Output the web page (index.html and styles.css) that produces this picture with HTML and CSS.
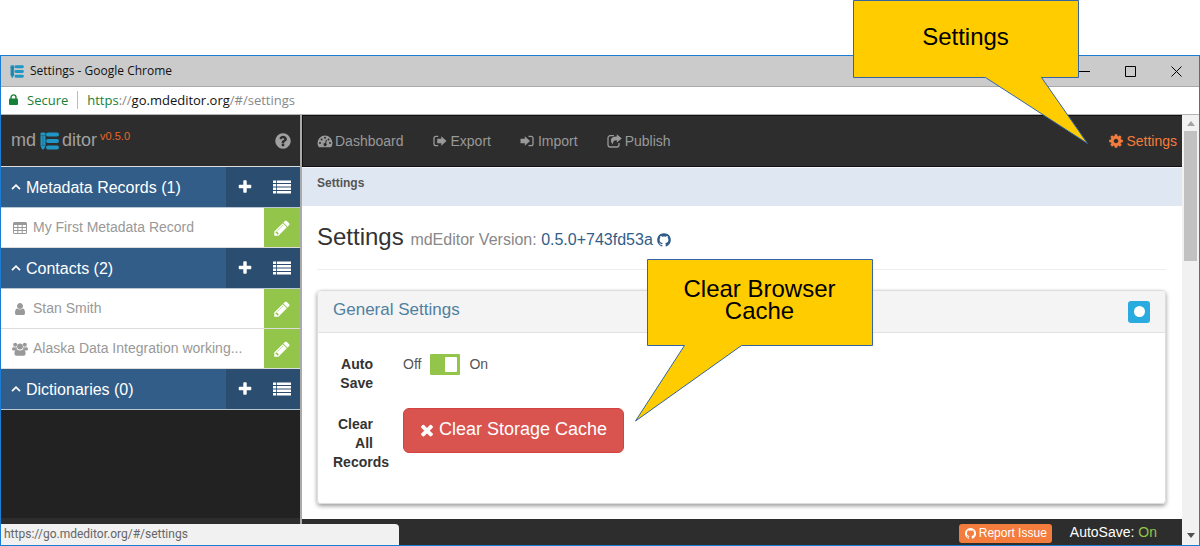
FILE: index.html
```html
<!DOCTYPE html>
<html lang="en">
<head>
<meta charset="utf-8">
<title>Settings</title>
<link rel="stylesheet" href="styles.css">
</head>
<body>
<svg class="defs" aria-hidden="true">
  <symbol id="plus" viewBox="0 0 1792 1792"><path d="M1600 736v192q0 40-28 68t-68 28h-416v416q0 40-28 68t-68 28h-192q-40 0-68-28t-28-68v-416h-416q-40 0-68-28t-28-68v-192q0-40 28-68t68-28h416v-416q0-40 28-68t68-28h192q40 0 68 28t28 68v416h416q40 0 68 28t28 68z"/></symbol>
  <symbol id="times" viewBox="0 0 1792 1792"><path d="M1490 1322q0 40-28 68l-136 136q-28 28-68 28t-68-28l-294-294-294 294q-28 28-68 28t-68-28l-136-136q-28-28-28-68t28-68l294-294-294-294q-28-28-28-68t28-68l136-136q28-28 68-28t68 28l294 294 294-294q28-28 68-28t68 28l136 136q28 28 28 68t-28 68l-294 294 294 294q28 28 28 68z"/></symbol>
  <symbol id="pencil" viewBox="0 0 1792 1792"><path d="M491 1536l91-91-235-235-91 91v107h128v128h107zm523-928q0-22-22-22-10 0-17 7l-542 542q-7 7-7 17 0 22 22 22 10 0 17-7l542-542q7-7 7-17zm-54-192l416 416-832 832h-416v-416zm683 96q0 53-37 90l-166 166-416-416 166-165q36-38 90-38 53 0 91 38l235 234q37 39 37 91z"/></symbol>
  <symbol id="help" viewBox="0 0 1792 1792"><path d="M1024 1376v-192q0-14-9-23t-23-9h-192q-14 0-23 9t-9 23v192q0 14 9 23t23 9h192q14 0 23-9t9-23zm256-672q0-88-55.500-163t-138.500-116-170-41q-243 0-371 213-15 24 8 42l132 100q7 6 19 6 16 0 25-12 53-68 86-92 34-24 86-24 48 0 85.500 26t37.500 59q0 38-20 61t-68 45q-63 28-115.500 86.500t-52.500 125.500v36q0 14 9 23t23 9h192q14 0 23-9t9-23q0-19 21.500-49.500t54.500-49.500q32-18 49-28.500t46-35 44.500-48 28-60.500 12.500-81zm384 192q0 209-103 385.500t-279.500 279.500-385.500 103-385.500-103-279.500-279.500-103-385.500 103-385.500 279.500-279.500 385.500-103 385.500 103 279.500 279.500 103 385.500z"/></symbol>
  <symbol id="cog" viewBox="0 0 1792 1792"><path d="M1152 896q0-106-75-181t-181-75-181 75-75 181 75 181 181 75 181-75 75-181zm512-109v222q0 12-8 23t-20 13l-185 28q-19 54-39 91 35 50 107 138 10 12 10 25t-9 23q-27 37-99 108t-94 71q-12 0-26-9l-138-108q-44 23-91 38-16 136-29 186-7 28-36 28h-222q-14 0-24.500-8.500t-11.500-21.500l-28-184q-49-16-90-37l-141 107q-10 9-25 9-14 0-25-11-126-114-165-168-7-10-7-23 0-12 8-23 15-21 51-66.500t54-70.500q-27-50-41-99l-183-27q-13-2-21-12.500t-8-23.500v-222q0-12 8-23t19-13l186-28q14-46 39-92-40-57-107-138-10-12-10-24 0-10 9-23 26-36 98.500-107.500t94.500-71.500q13 0 26 10l138 107q44-23 91-38 16-136 29-186 7-28 36-28h222q14 0 24.500 8.500t11.500 21.500l28 184q49 16 90 37l142-107q9-9 24-9 13 0 25 10 129 119 165 170 7 8 7 22 0 12-8 23-15 21-51 66.500t-54 70.500q26 50 41 98l183 28q13 2 21 12.500t8 23.500z"/></symbol>
  <symbol id="user" viewBox="0 0 1792 1792"><path d="M1536 1399q0 109-62.500 187t-150.500 78h-854q-88 0-150.500-78t-62.500-187q0-85 8.500-160.500t31.500-152 58.500-131 94-89 134.500-34.500q131 128 313 128t313-128q76 0 134.500 34.500t94 89 58.500 131 31.500 152 8.500 160.500zm-256-887q0 159-112.500 271.500t-271.500 112.500-271.500-112.500-112.500-271.500 112.500-271.500 271.500-112.500 271.500 112.500 112.500 271.500z"/></symbol>
  <symbol id="github" viewBox="0 0 1792 1792"><path d="M896 128q209 0 385.500 103t279.500 279.500 103 385.500q0 251-146.500 451.500t-378.500 277.500q-27 5-40-7t-13-30q0-3 .5-76.500t.5-134.500q0-97-52-142 57-6 102.500-18t94-39 81-66.500 53-105 20.500-150.500q0-119-79-206 37-91-8-204-28-9-81 11t-92 44l-38 24q-93-26-192-26t-192 26q-16-11-42.500-27t-83.500-38.500-85-13.500q-45 113-8 204-79 87-79 206 0 85 20.500 150t52.500 105 80.500 67 94 39 102.500 18q-39 36-49 103-21 10-45 15t-57 5-65.500-21.500-55.500-62.500q-19-32-48.500-52t-49.500-24l-20-3q-21 0-29 4.500t-5 11.500 9 14 13 12l7 5q22 10 43.500 38t31.500 51l10 23q13 38 44 61.500t67 30 69.500 7 55.500-3.500l23-4q0 38 .5 88.500t.5 54.500q0 18-13 30t-40 7q-232-77-378.500-277.500t-146.500-451.500q0-209 103-385.500t279.500-279.500 385.500-103z"/></symbol>
  <symbol id="list" viewBox="0 0 18 14"><path d="M0 .5h3.200V3H0zM4 .5h14V3H4zM0 4h3.200v2.500H0zM4 4h14v2.500H4zM0 7.500h3.200V10H0zM4 7.500h14V10H4zM0 11h3.200v2.500H0zM4 11h14v2.500H4z"/></symbol>
  <symbol id="table" viewBox="0 0 14 14"><path fill-rule="evenodd" d="M1.500 1h11A1.500 1.500 0 0 1 14 2.500v9a1.500 1.500 0 0 1-1.500 1.500h-11A1.500 1.500 0 0 1 0 11.500v-9A1.500 1.500 0 0 1 1.500 1zM1 4v2h3.300V4zm4.300 0v2h3.400V4zm4.400 0v2H13V4zM1 7v2h3.300V7zm4.300 0v2h3.400V7zm4.400 0v2H13V7zM1 10v2h3.300v-2zm4.300 0v2h3.400v-2zm4.400 0v2H13v-2z"/></symbol>
  <symbol id="users" viewBox="0 0 16 14"><circle cx="3.200" cy="2.800" r="2"/><circle cx="12.800" cy="2.800" r="2"/><path d="M1.600 4.900q1.600 1 3 .2-.2 1.600.9 2.400-1.500.1-2.300 1H1.400Q0 8.500 0 7.200q0-2.200 1.600-2.300zM14.400 4.900q-1.600 1-3 .2.200 1.600-.9 2.400 1.500.1 2.300 1h1.800q1.400 0 1.400-1.300 0-2.200-1.600-2.300z"/><circle cx="8" cy="4.500" r="2.900"/><path d="M5 7.500q3 2 6 0 2.600.2 2.600 4 0 2.200-2 2.200H4.400q-2 0-2-2.200 0-3.800 2.600-4z"/></symbol>
  <symbol id="gauge" viewBox="0 0 16 14"><path fill-rule="evenodd" d="M8 1.500a7.500 7.500 0 0 1 7.500 7.500q0 2.200-1.200 4-.2.300-.6.300H2.300q-.4 0-.6-.3Q.5 11.200.5 9A7.500 7.500 0 0 1 8 1.500zM3 8a1 1 0 1 0 .01 2A1 1 0 0 0 3 8zm1.600-3.600a1 1 0 1 0 .01 2 1 1 0 0 0-.01-2zM8 2.800a1 1 0 1 0 .01 2A1 1 0 0 0 8 2.800zm3.500 1.600a1 1 0 1 0 .01 2 1 1 0 0 0-.01-2zM13 8a1 1 0 1 0 .01 2A1 1 0 0 0 13 8zM9 5.700l-.9 3.200a1.600 1.600 0 1 0 1 .3l.9-3.200z"/></symbol>
  <symbol id="export" viewBox="0 0 14 14" preserveAspectRatio="xMinYMid meet"><path d="M5.200 2.300H3A2 2 0 0 0 1 4.300v5.400a2 2 0 0 0 2 2h2.200" fill="none" stroke="currentColor" stroke-width="1.300"/><path d="M8.300 2.200L13.500 7l-5.200 4.800V9.200H4.200V4.800h4.100z"/></symbol>
  <symbol id="import" viewBox="0 0 14 14" preserveAspectRatio="xMinYMid meet"><path d="M8.500 2.300H11a2 2 0 0 1 2 2v5.400a2 2 0 0 1-2 2H8.500" fill="none" stroke="currentColor" stroke-width="1.300"/><path d="M4.800 2.200L10 7l-5.200 4.800V9.200H.5V4.800h4.300z"/></symbol>
  <symbol id="publish" viewBox="0 0 15 14" preserveAspectRatio="xMinYMid meet"><path d="M7 1.700H3.200A2.200 2.200 0 0 0 1 3.900v6.900A2.200 2.200 0 0 0 3.200 13h6.600a2.200 2.200 0 0 0 2.200-2.200V8.900" fill="none" stroke="currentColor" stroke-width="1.300"/><path d="M9.800.2l5 4.200-5 4.200V6.200Q5.500 5.900 6 10.500 3.300 8.500 3.900 5.800 4.800 2.600 9.800 2.600z"/></symbol>
  <symbol id="chevron" viewBox="0 0 10 10"><path d="M1 7.200l4-4 4 4" fill="none" stroke="currentColor" stroke-width="1.700"/></symbol>
  <symbol id="logo" viewBox="0 0 19 18"><path d="M.5 1.500q0-1 1-1h3q1 0 1 1V14l-1.800 3.500H2.300L.5 14z"/><path d="M8 2.500h9M8 9h9M8 15.500h9" stroke="currentColor" stroke-width="4" stroke-linecap="round"/><path d="M.5 3.500h5M.8 13.500h4.400M3 4v9" stroke="#2d2d2d" stroke-opacity=".45" stroke-width=".8" fill="none"/></symbol>
  <symbol id="lock" viewBox="0 0 9 11"><path d="M2 5V3.400a2.500 2.500 0 0 1 5 0V5" fill="none" stroke="currentColor" stroke-width="1.400"/><rect y="4.500" width="9" height="6.500" rx="1"/></symbol>
</svg>

<div class="window">
  <div class="titlebar">
    <svg class="favicon"><use href="#logo"/></svg>
    <span class="window-title">Settings - Google Chrome</span>
    <div class="window-controls">
      <button type="button" aria-label="Minimize"><svg class="control"><path d="M0 5.500h11"/></svg></button>
      <button type="button" aria-label="Maximize"><svg class="control"><path d="M.5.500h10v10H.5z"/></svg></button>
      <button type="button" aria-label="Close"><svg class="control"><path d="M.5.500l10 10M10.500.500l-10 10"/></svg></button>
    </div>
  </div>
  <div class="addressbar">
    <svg class="lock"><use href="#lock"/></svg>
    <span class="secure">Secure</span>
    <span class="url"><span class="scheme">https</span>://<span class="host">go.mdeditor.org</span>/#/settings</span>
  </div>

  <div class="viewport">
    <aside class="sidebar">
      <header class="brand">
        <span class="logo">md<svg class="logo-mark"><use href="#logo"/></svg>ditor</span>
        <sup class="version">v0.5.0</sup>
        <a class="help" href="#help" aria-label="Help"><svg class="icon-lg"><use href="#help"/></svg></a>
      </header>
      <div class="group">
        <a class="group-name" href="#records"><svg class="chevron"><use href="#chevron"/></svg>Metadata Records (1)</a>
        <button type="button" aria-label="Add record"><svg class="icon-lg"><use href="#plus"/></svg></button>
        <button type="button" aria-label="List records"><svg class="list-icon"><use href="#list"/></svg></button>
      </div>
      <div class="item">
        <a href="#record"><svg class="icon"><use href="#table"/></svg>My First Metadata Record</a>
        <button type="button" aria-label="Edit record"><svg class="icon-lg"><use href="#pencil"/></svg></button>
      </div>
      <div class="group">
        <a class="group-name" href="#contacts"><svg class="chevron"><use href="#chevron"/></svg>Contacts (2)</a>
        <button type="button" aria-label="Add contact"><svg class="icon-lg"><use href="#plus"/></svg></button>
        <button type="button" aria-label="List contacts"><svg class="list-icon"><use href="#list"/></svg></button>
      </div>
      <div class="item">
        <a href="#stan"><svg class="icon"><use href="#user"/></svg>Stan Smith</a>
        <button type="button" aria-label="Edit Stan Smith"><svg class="icon-lg"><use href="#pencil"/></svg></button>
      </div>
      <div class="item">
        <a href="#alaska"><svg class="icon"><use href="#users"/></svg>Alaska Data Integration working...</a>
        <button type="button" aria-label="Edit working group"><svg class="icon-lg"><use href="#pencil"/></svg></button>
      </div>
      <div class="group">
        <a class="group-name" href="#dictionaries"><svg class="chevron"><use href="#chevron"/></svg>Dictionaries (0)</a>
        <button type="button" aria-label="Add dictionary"><svg class="icon-lg"><use href="#plus"/></svg></button>
        <button type="button" aria-label="List dictionaries"><svg class="list-icon"><use href="#list"/></svg></button>
      </div>
      <div class="sidebar-foot"></div>
    </aside>

    <div class="main">
      <nav class="navbar">
        <a href="#dashboard"><svg class="icon"><use href="#gauge"/></svg>Dashboard</a>
        <a href="#export"><svg class="icon"><use href="#export"/></svg>Export</a>
        <a href="#import"><svg class="icon"><use href="#import"/></svg>Import</a>
        <a href="#publish"><svg class="icon"><use href="#publish"/></svg>Publish</a>
        <a class="active" href="#settings"><svg class="icon-md"><use href="#cog"/></svg>Settings</a>
      </nav>
      <div class="crumbs">Settings</div>
      <main class="content">
        <h1>Settings <small>mdEditor Version: <a href="#version">0.5.0+743fd53a<svg class="icon-github"><use href="#github"/></svg></a></small></h1>
        <section class="card">
          <header class="card-head">
            <h2>General Settings</h2>
            <button type="button" class="dot-button" aria-label="Toggle section"><span class="dot"></span></button>
          </header>
          <div class="card-body">
            <div class="field">
              <label class="field-label" for="autosave">Auto Save</label>
              <div class="toggle"><span>Off</span><input type="checkbox" id="autosave" checked><span>On</span></div>
            </div>
            <div class="field">
              <label class="field-label" for="clear">Clear All Records</label>
              <button type="button" class="danger" id="clear"><svg class="icon-lg"><use href="#times"/></svg>Clear Storage Cache</button>
            </div>
          </div>
        </section>
      </main>
      <footer class="statusbar">
        <a class="report" href="#issue"><svg class="icon-sm"><use href="#github"/></svg>Report Issue</a>
        <span>AutoSave: <span class="on">On</span></span>
      </footer>
    </div>

    <div class="scrollbar">
      <svg class="arrow up"><path d="M0 5l4-5 4 5z"/></svg>
      <div class="thumb"></div>
      <svg class="arrow down"><path d="M0 0l4 5 4-5z"/></svg>
    </div>
  </div>
  <div class="link-status">https://go.mdeditor.org/#/settings</div>
</div>

<div class="callout callout-settings">
  <svg class="callout-shape" viewBox="0 0 236 145"><path d="M.5.500h225v77h-37l46 66-102-66H.5z"/></svg>
  <p>Settings</p>
</div>
<div class="callout callout-cache">
  <svg class="callout-shape" viewBox="0 0 239 163"><path d="M12.500.500h225v86h-131L.5 162l49-75.500h-37z"/></svg>
  <p>Clear Browser Cache</p>
</div>
</body>
</html>
```

FILE: styles.css
```css
* { box-sizing: border-box; }

body {
  height: 100vh;
  margin: 0;
  padding-top: 55px;
  background: #fff;
  color: #555;
  font: 14px/19px "Liberation Sans", Arial, sans-serif;
}

a { color: inherit; text-decoration: none; }
button { margin: 0; padding: 0; border: 0; font: inherit; color: inherit; background: none; }
svg { fill: currentColor; flex: none; }
.defs { position: absolute; width: 0; height: 0; }

.icon { width: 16px; height: 14px; }
.icon-md { width: 16px; height: 16px; }
.icon-lg { width: 18px; height: 18px; }
.icon-sm { width: 13px; height: 13px; }

.window {
  position: relative;
  display: flex;
  flex-direction: column;
  height: 100%;
  border: 1px solid #1c7cd5;
}

/* browser chrome */
.titlebar {
  display: flex;
  align-items: center;
  flex: none;
  height: 31px;
  padding-left: 9px;
  border-bottom: 1px solid #a9a9a9;
  background: #cbcbcb;
  color: #111;
  font: 12px/16px "Open Sans", "Noto Sans", sans-serif;
}
.favicon { width: 14px; height: 13px; color: #1f96c4; }
.window-title { margin-left: 6px; }
.window-controls { display: flex; margin-left: auto; }
.window-controls button { display: flex; justify-content: center; width: 46px; }
.control { width: 11px; height: 11px; fill: none; stroke: #000; }

.addressbar {
  display: flex;
  align-items: center;
  flex: none;
  height: 28px;
  padding: 0 0 2px 8px;
  border-bottom: 1px solid #b3b3b3;
  background: #fff;
  font: 13px/18px "Open Sans", "Noto Sans", sans-serif;
}
.lock { width: 9px; height: 11px; color: #178038; }
.secure {
  margin-left: 9px;
  padding-right: 9px;
  border-right: 1px solid #bbb;
  color: #178038;
}
.url { margin-left: 9px; color: #888; }
.scheme { color: #178038; }
.host { color: #111; }

.viewport { display: flex; flex: 1; min-height: 0; }

/* sidebar */
.sidebar {
  display: flex;
  flex-direction: column;
  flex: none;
  width: 301px;
  border-right: 2px solid #aaa;
  background: #222;
}
.brand {
  display: flex;
  align-items: center;
  flex: none;
  height: 52px;
  padding: 0 8px 0 10px;
  border-bottom: 1px solid #ddd;
  background: #2d2d2d;
  color: #a0a0a0;
}
.logo { display: flex; align-items: center; font-size: 18px; }
.logo-mark { width: 19px; height: 18px; margin: 0 3px 0 4px; color: #1f96c4; }
.version { align-self: flex-start; margin: 12px 0 0 3px; color: #e8672c; font-size: 11px; line-height: 18px; }
.help { display: flex; margin-left: auto; }

.group, .item { display: flex; flex: none; }
.group { height: 41px; border-bottom: 1px solid #b9c6d3; background: #325d88; color: #fff; font-size: 16px; }
.group-name { display: flex; align-items: center; flex: 1; padding-left: 10px; }
.chevron { width: 10px; height: 10px; margin-right: 5px; }
.group button, .item button { display: flex; align-items: center; justify-content: center; width: 37px; }
.group button { background: #2a4d70; }
.group button .icon-lg { width: 16px; height: 16px; }
.list-icon { width: 18px; height: 14px; }
.item { height: 40px; border-bottom: 1px solid #ddd; background: #fff; color: #999; }
.item a { display: flex; align-items: center; flex: 1; gap: 5px; padding-left: 11px; }
.item button { width: 36px; background: #93c54b; color: #fff; }
.sidebar-foot { height: 27px; margin-top: auto; background: #2d2d2d; }

/* main column */
.main { display: flex; flex-direction: column; flex: 1; min-width: 0; background: #fff; }
.navbar {
  display: flex;
  align-items: center;
  flex: none;
  gap: 29px;
  height: 52px;
  padding: 0 5px 0 14px;
  border: solid #111;
  border-width: 1px 0 1px 1px;
  background: #2d2d2d;
  color: #999;
}
.navbar a { display: flex; align-items: center; gap: 2px; }
.navbar .active { margin-left: auto; color: #f47c3c; }
.crumbs {
  flex: none;
  height: 39px;
  padding: 6px 15px;
  border-top: 1px solid #f4f7fb;
  background: #dfe8f2;
  font-size: 12px;
  font-weight: bold;
}
.content { flex: 1; min-height: 0; padding: 14px 16px 0 15px; }
h1 {
  margin: 0 0 20px;
  padding-bottom: 13px;
  border-bottom: 1px solid #eee;
  color: #333;
  font-size: 24px;
  font-weight: normal;
  line-height: 33px;
}
h1 small { color: #888; font-size: 16px; }
h1 a { color: #325d88; }
.icon-github { width: 16px; height: 16px; margin-left: 3px; vertical-align: -3px; }

.card {
  border: 1px solid #ddd;
  border-radius: 4px;
  box-shadow: 0 2px 4px rgba(0, 0, 0, .4);
}
.card-head {
  display: flex;
  align-items: center;
  justify-content: space-between;
  height: 42px;
  padding: 0 15px;
  border-bottom: 1px solid #e2e2e2;
  border-radius: 4px 4px 0 0;
  background: #f4f4f4;
}
h2 { margin: 0 0 4px; color: #4f809f; font-size: 17px; font-weight: normal; }
.dot-button { display: flex; align-items: center; justify-content: center; width: 22px; height: 22px; border-radius: 3px; background: #29abe0; }
.dot { width: 11px; height: 11px; border-radius: 50%; background: #fff; }
.card-body { display: flex; flex-direction: column; gap: 15px; padding: 15px 15px 31px; }
.field { display: flex; align-items: flex-start; gap: 30px; }
.field-label { width: 40px; padding-top: 7px; color: #333; font-weight: bold; text-align: right; }
.toggle { display: flex; align-items: center; gap: 9px; padding-top: 6px; }
.toggle input {
  appearance: none;
  display: flex;
  justify-content: flex-end;
  width: 30px;
  height: 21px;
  margin: 0;
  padding: 3px;
  border-radius: 1px;
  background: #93c54b;
}
.toggle input::before { content: ""; width: 12px; border-radius: 1px; background: #fff; }
.danger {
  display: flex;
  align-items: center;
  gap: 3px;
  height: 45px;
  padding: 0 16px 2px 14px;
  border: 1px solid #d2433f;
  border-radius: 6px;
  background: #d9534f;
  color: #fff;
  font-size: 18px;
}

.statusbar {
  display: flex;
  align-items: center;
  justify-content: flex-end;
  flex: none;
  gap: 18px;
  height: 26px;
  padding-right: 25px;
  background: #2d2d2d;
  color: #fff;
}
.report {
  display: flex;
  align-items: center;
  gap: 2px;
  height: 19px;
  margin-top: 2px;
  padding: 0 5px;
  border-radius: 3px;
  background: #f47c3c;
  font-size: 12px;
}
.on { color: #93c54b; }

/* page scroll bar */
.scrollbar {
  display: flex;
  flex-direction: column;
  align-items: center;
  flex: none;
  width: 17px;
  padding: 6px 0 7px;
  background: #f1f1f1;
}
.arrow { width: 8px; height: 5px; }
.up { color: #a3a3a3; }
.down { margin-top: auto; color: #505050; }
.thumb { width: 13px; height: 130px; margin-top: 5px; background: #c1c1c1; }

.link-status {
  position: absolute;
  left: 0;
  bottom: 0;
  width: 398px;
  height: 21px;
  padding-left: 3px;
  border-top-right-radius: 4px;
  background: #f1f1f1;
  color: #666;
  font: 12px/21px Roboto, "Open Sans", sans-serif;
}

/* annotations over the window */
.callout { position: absolute; color: #000; font-size: 24px; line-height: 22px; text-align: center; }
.callout p { position: relative; margin: 0; width: 225px; padding: 0 30px; }
.callout-shape { position: absolute; top: 0; left: 0; width: 100%; height: 100%; fill: #fc0; stroke: #3465a4; }
.callout-settings { top: 0; left: 853px; width: 236px; height: 145px; padding-top: 26px; }
.callout-cache { top: 259px; left: 635px; width: 239px; height: 163px; padding: 19px 0 0 12px; }
```
